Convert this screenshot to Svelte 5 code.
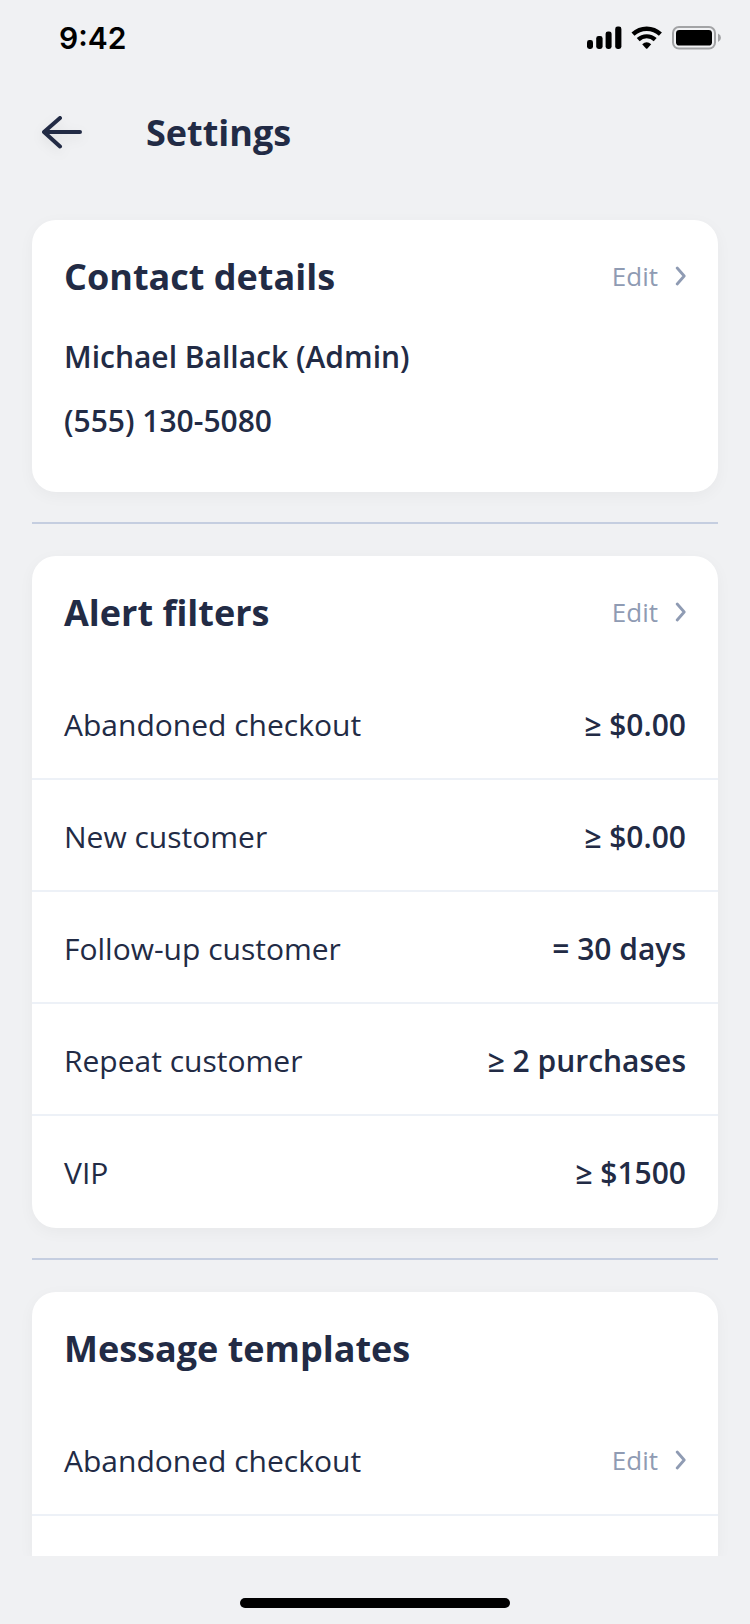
<script>
  const filters = [
    { label: 'Abandoned checkout', value: '≥ $0.00' },
    { label: 'New customer', value: '≥ $0.00' },
    { label: 'Follow-up customer', value: '= 30 days' },
    { label: 'Repeat customer', value: '≥ 2 purchases' },
    { label: 'VIP', value: '≥ $1500' }
  ];
</script>

{#snippet edit(subject)}
  <button class="edit" type="button" aria-label="Edit {subject}">
    <span>Edit</span>
    <svg width="12" height="22" viewBox="0 0 12 22" fill="none" aria-hidden="true">
      <path d="M3.2 3 L10.2 11 L3.2 19" stroke="currentColor" stroke-width="2.8" stroke-linecap="round" stroke-linejoin="round" />
    </svg>
  </button>
{/snippet}

<div class="screen">
  <div class="status">
    <span class="time">9:42</span>
    <div class="indicators">
      <svg width="35" height="24" viewBox="0 0 35 24" aria-hidden="true">
        <rect x="0" y="14" width="6" height="9" rx="2.4" />
        <rect x="9.2" y="10" width="6.4" height="13" rx="2.4" />
        <rect x="18.6" y="5.4" width="6" height="17.6" rx="2.4" />
        <rect x="28.2" y="0.6" width="6.2" height="22.4" rx="2.4" />
      </svg>
      <svg width="32" height="24" viewBox="0 0 32 24" fill="none" stroke="#000" aria-hidden="true">
        <path d="M2 8.2 A20 20 0 0 1 29.4 8.2" stroke-width="4.4" />
        <path d="M7.2 13.6 A12.4 12.4 0 0 1 24.2 13.6" stroke-width="4.2" />
        <path d="M11.2 18.2 Q15.7 14.4 20.2 18.2 L16.4 22.4 Q15.7 23 15 22.4 Z" fill="#000" stroke="none" />
      </svg>
      <svg width="50" height="24" viewBox="0 0 50 24" aria-hidden="true">
        <rect x="1" y="1" width="42" height="21.6" rx="6" fill="none" stroke="#a2a3a5" stroke-width="2" />
        <rect x="4" y="4" width="36" height="15.6" rx="3.4" />
        <path d="M46 7.6 Q49 9 49 11.8 Q49 14.6 46 16 Z" fill="#a2a3a5" />
      </svg>
    </div>
  </div>

  <header class="topbar">
    <button class="back" type="button" aria-label="Back">
      <svg width="40" height="34" viewBox="0 0 40 34" fill="none" aria-hidden="true">
        <path d="M18 3 L2 17 L18 31.5 M2 17 H38" stroke="currentColor" stroke-width="4" stroke-linecap="round" stroke-linejoin="round" />
      </svg>
    </button>
    <h1>Settings</h1>
  </header>

  <main>
    <section class="card">
      <div class="head">
        <h2>Contact details</h2>
        {@render edit('contact details')}
      </div>
      <div class="contact">
        <p>Michael Ballack (Admin)</p>
        <p>(555) 130-5080</p>
      </div>
    </section>

    <hr />

    <section class="card">
      <div class="head">
        <h2>Alert filters</h2>
        {@render edit('alert filters')}
      </div>
      <ul>
        {#each filters as filter}
          <li>
            <span>{filter.label}</span>
            <span class="value">{filter.value}</span>
          </li>
        {/each}
      </ul>
    </section>

    <hr />

    <section class="card open">
      <div class="head">
        <h2>Message templates</h2>
      </div>
      <ul>
        <li>
          <span>Abandoned checkout</span>
          {@render edit('abandoned checkout template')}
        </li>
      </ul>
    </section>
  </main>

  <footer><div class="home"></div></footer>
</div>

<style>
  :global(body) {
    margin: 0;
    background: #f0f1f3;
  }

  .screen {
    display: flex;
    flex-direction: column;
    height: 100vh;
    background: #f0f1f3;
    color: #222b45;
    font-family: 'Open Sans', 'Noto Sans', sans-serif;
    font-size: 30px;
    line-height: 42px;
  }

  h1, h2, p, ul {
    margin: 0;
    padding: 0;
  }

  h1, h2 {
    font-size: 36px;
    font-weight: 700;
    line-height: 42px;
  }

  button {
    display: flex;
    align-items: center;
    padding: 0;
    border: 0;
    background: none;
    font: inherit;
    cursor: pointer;
  }

  .status {
    display: flex;
    flex: none;
    align-items: center;
    justify-content: space-between;
    height: 76px;
    padding: 0 28px 0 59px;
  }

  .time {
    color: #000;
    font-family: Inter, sans-serif;
    font-weight: 600;
  }

  .indicators {
    display: flex;
    gap: 9px;
  }

  .topbar {
    display: flex;
    flex: none;
    align-items: flex-start;
    gap: 64px;
    height: 72px;
    padding: 36px 42px 4px;
  }

  .back {
    height: 40px;
    color: #222b45;
    filter: drop-shadow(0 4px 6px rgba(0, 0, 0, 0.08));
  }

  main {
    display: flex;
    flex: 1;
    flex-direction: column;
    min-height: 0;
    padding: 32px 32px 0;
    overflow: hidden;
  }

  .card {
    flex: none;
    border-radius: 24px;
    background: #fff;
    box-shadow: 0 4px 16px rgba(0, 0, 0, 0.04);
  }

  .card.open {
    flex: 1 0 auto;
    border-radius: 24px 24px 0 0;
  }

  hr {
    flex: none;
    width: 100%;
    height: 2px;
    margin: 30px 0 32px;
    border: 0;
    background: #c5cee0;
  }

  .head {
    display: flex;
    align-items: flex-start;
    justify-content: space-between;
    padding: 36px 32px 27px;
  }

  .edit {
    gap: 16px;
    color: #8f9bb3;
    font-size: 26px;
    line-height: 40px;
  }

  .contact {
    padding: 0 32px 39px;
    font-weight: 600;
    line-height: 64px;
  }

  ul {
    padding-top: 7px;
    list-style: none;
  }

  li {
    display: flex;
    align-items: flex-start;
    justify-content: space-between;
    padding: 36px 32px 32px;
    border-bottom: 2px solid #edf1f7;
  }

  .card:not(.open) li:last-child {
    padding-bottom: 34px;
    border-bottom: 0;
  }

  .value {
    font-weight: 600;
  }

  footer {
    display: flex;
    flex: none;
    justify-content: center;
    padding: 42px 0 16px;
  }

  .home {
    width: 36%;
    height: 10px;
    border-radius: 5px;
    background: #000;
  }
</style>
